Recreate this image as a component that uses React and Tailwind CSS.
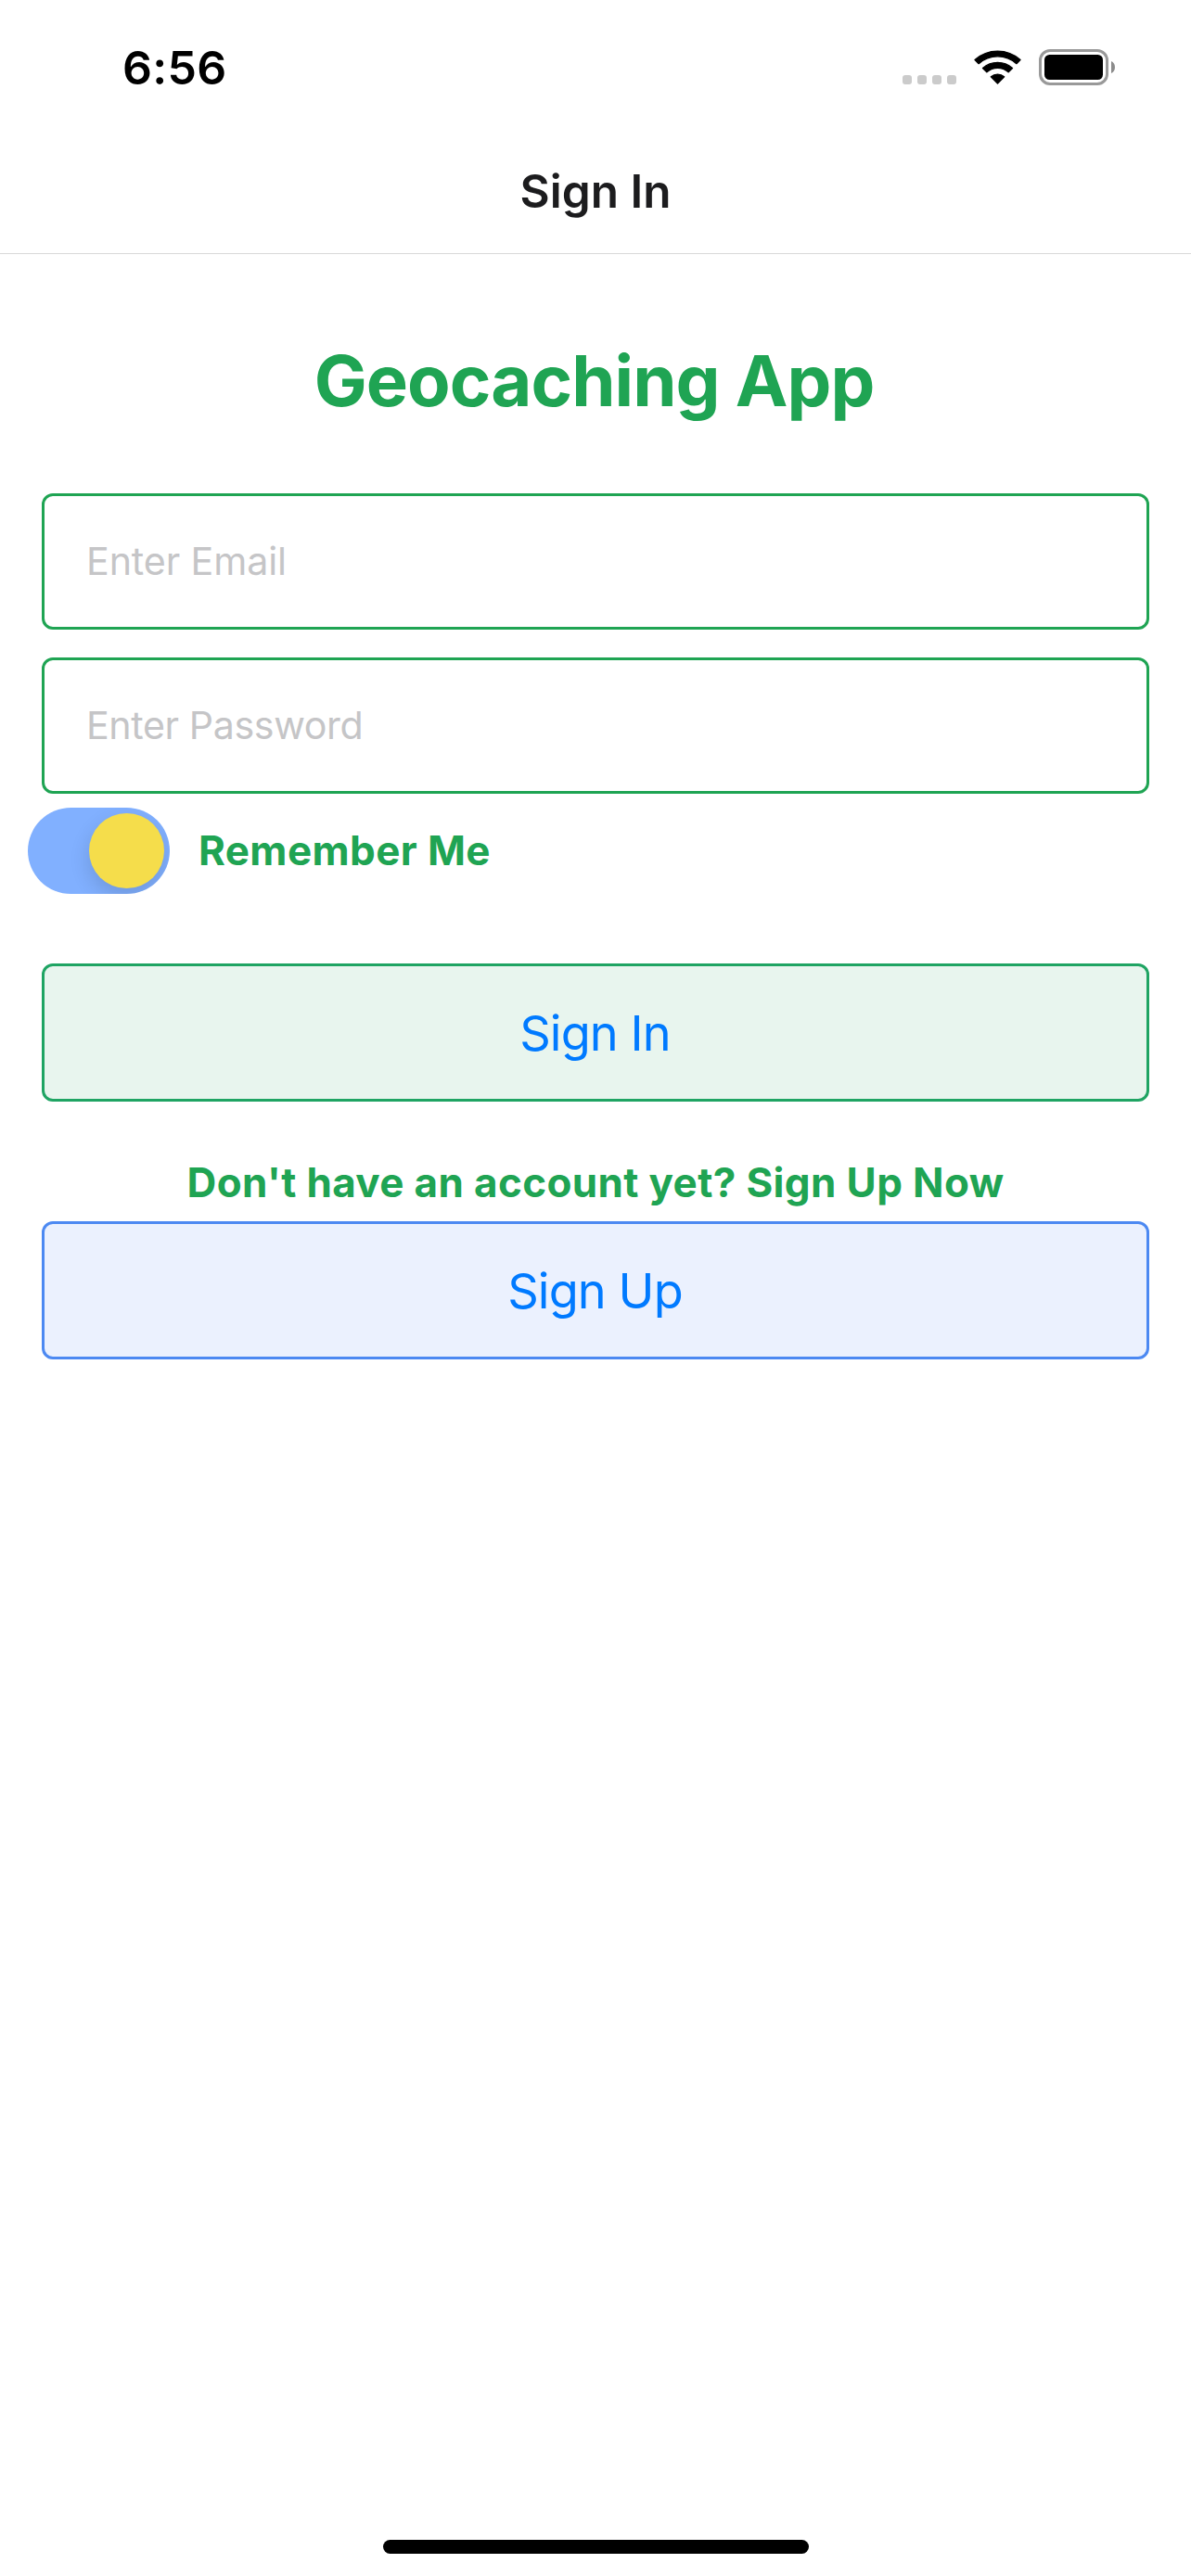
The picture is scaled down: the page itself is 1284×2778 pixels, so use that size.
function StatusBar() {
  return (
    <div className="flex h-[141px] items-start justify-between pl-[132px] pr-[82px] pt-[43px] text-black">
      <span className="text-[50px] font-semibold leading-[60px] tracking-[0.3px]">6:56</span>
      <div className="flex pt-[10px]">
        <div className="mt-[28px] flex gap-[6px]">
          {[0, 1, 2, 3].map((dot) => (
            <span key={dot} className="size-[10px] rounded-[3px] bg-[#cbcbcb]" />
          ))}
        </div>
        <svg className="ml-[19px] h-[39px] w-[51px]" viewBox="0 0 153 117" aria-hidden="true">
          <g fill="black" stroke="black" strokeWidth="4" strokeLinejoin="round">
            <path d="M3 34.5A110 110 0 0 1 150 34.5L137.500 47A91 91 0 0 0 15.500 47Z" />
            <path d="M28.500 61.500A71.500 71.500 0 0 1 124.500 61.500L111.500 74.500A53 53 0 0 0 41.500 74.500Z" />
            <path d="M55 89A33.500 33.500 0 0 1 98 89L76.500 111Z" />
          </g>
        </svg>
        <svg className="ml-[19px] h-[39px] w-[82px]" viewBox="0 0 82 39" aria-hidden="true">
          <rect x="1.500" y="1.500" width="72" height="36" rx="10.500" fill="none" stroke="#999999" strokeWidth="3" />
          <rect x="6" y="6" width="63" height="27" rx="5.500" fill="black" />
          <path d="M78 13C80.500 14 82 16.500 82 19.500C82 22.500 80.500 25 78 26Z" fill="#8c8c8c" />
        </svg>
      </div>
    </div>
  );
}

function Field({ type, placeholder, spacing }) {
  return (
    <input
      type={type}
      placeholder={placeholder}
      className={`h-[147px] w-full rounded-[12px] border-[3px] border-[#1fa453] bg-white px-[45px] pb-[2px] text-[41.2px] outline-none placeholder:text-[#c5c5c7] ${spacing}`}
    />
  );
}

function ActionButton({ children, tone }) {
  return (
    <button
      className={`h-[149px] w-full rounded-[12px] border-[3px] pr-[1px] pt-[1px] text-center text-[52.3px] tracking-[-0.9px] text-[#007aff] ${tone}`}
    >
      {children}
    </button>
  );
}

function RememberToggle() {
  return (
    <div className="flex h-[93px] w-[153px] items-center justify-end overflow-hidden rounded-full bg-[#81b0ff] px-[6px]">
      <span className="size-[81px] rounded-full bg-[#f5dd4b] shadow-[0_9px_22px_rgba(0,0,0,0.14)]" />
    </div>
  );
}

export default function App() {
  return (
    <div className="flex h-[2778px] w-[1284px] flex-col overflow-hidden bg-white font-['Inter',sans-serif]">
      <StatusBar />
      <header className="flex h-[133px] justify-center border-b border-[#d8d8d8]">
        <h1 className="mt-[35px] text-[49.5px] font-semibold leading-[60px] text-[#1c1c1e]">Sign In</h1>
      </header>

      <main className="flex flex-1 flex-col px-[45px] pt-[91px] text-[#1fa453]">
        <h2 className="pr-[3px] text-center text-[76px] font-[650] leading-[90px] tracking-[-0.95px]">
          Geocaching App
        </h2>
        <form className="mt-[77px] flex flex-col gap-[30px]">
          <Field type="email" placeholder="Enter Email" spacing="tracking-[-0.12px]" />
          <Field type="password" placeholder="Enter Password" spacing="tracking-[-0.4px]" />
        </form>
        <div className="-ml-[15px] mt-[15px] flex items-center gap-[31px]">
          <RememberToggle />
          <span className="pb-[1px] text-[44px] font-[650] leading-[54px] tracking-[0.4px]">Remember Me</span>
        </div>
        <div className="mt-[75px]">
          <ActionButton tone="border-[#1fa463] bg-[#e8f5ee]">Sign In</ActionButton>
        </div>
        <p className="mt-[60px] text-center text-[44px] font-[650] leading-[54px] tracking-[0.36px]">
          Don't have an account yet? Sign Up Now
        </p>
        <div className="mt-[15px]">
          <ActionButton tone="border-[#4c89f2] bg-[#ebf1fe]">Sign Up</ActionButton>
        </div>
      </main>

      <div className="mb-[24px] h-[15px] w-[459px] self-center rounded-full bg-black" />
    </div>
  );
}
